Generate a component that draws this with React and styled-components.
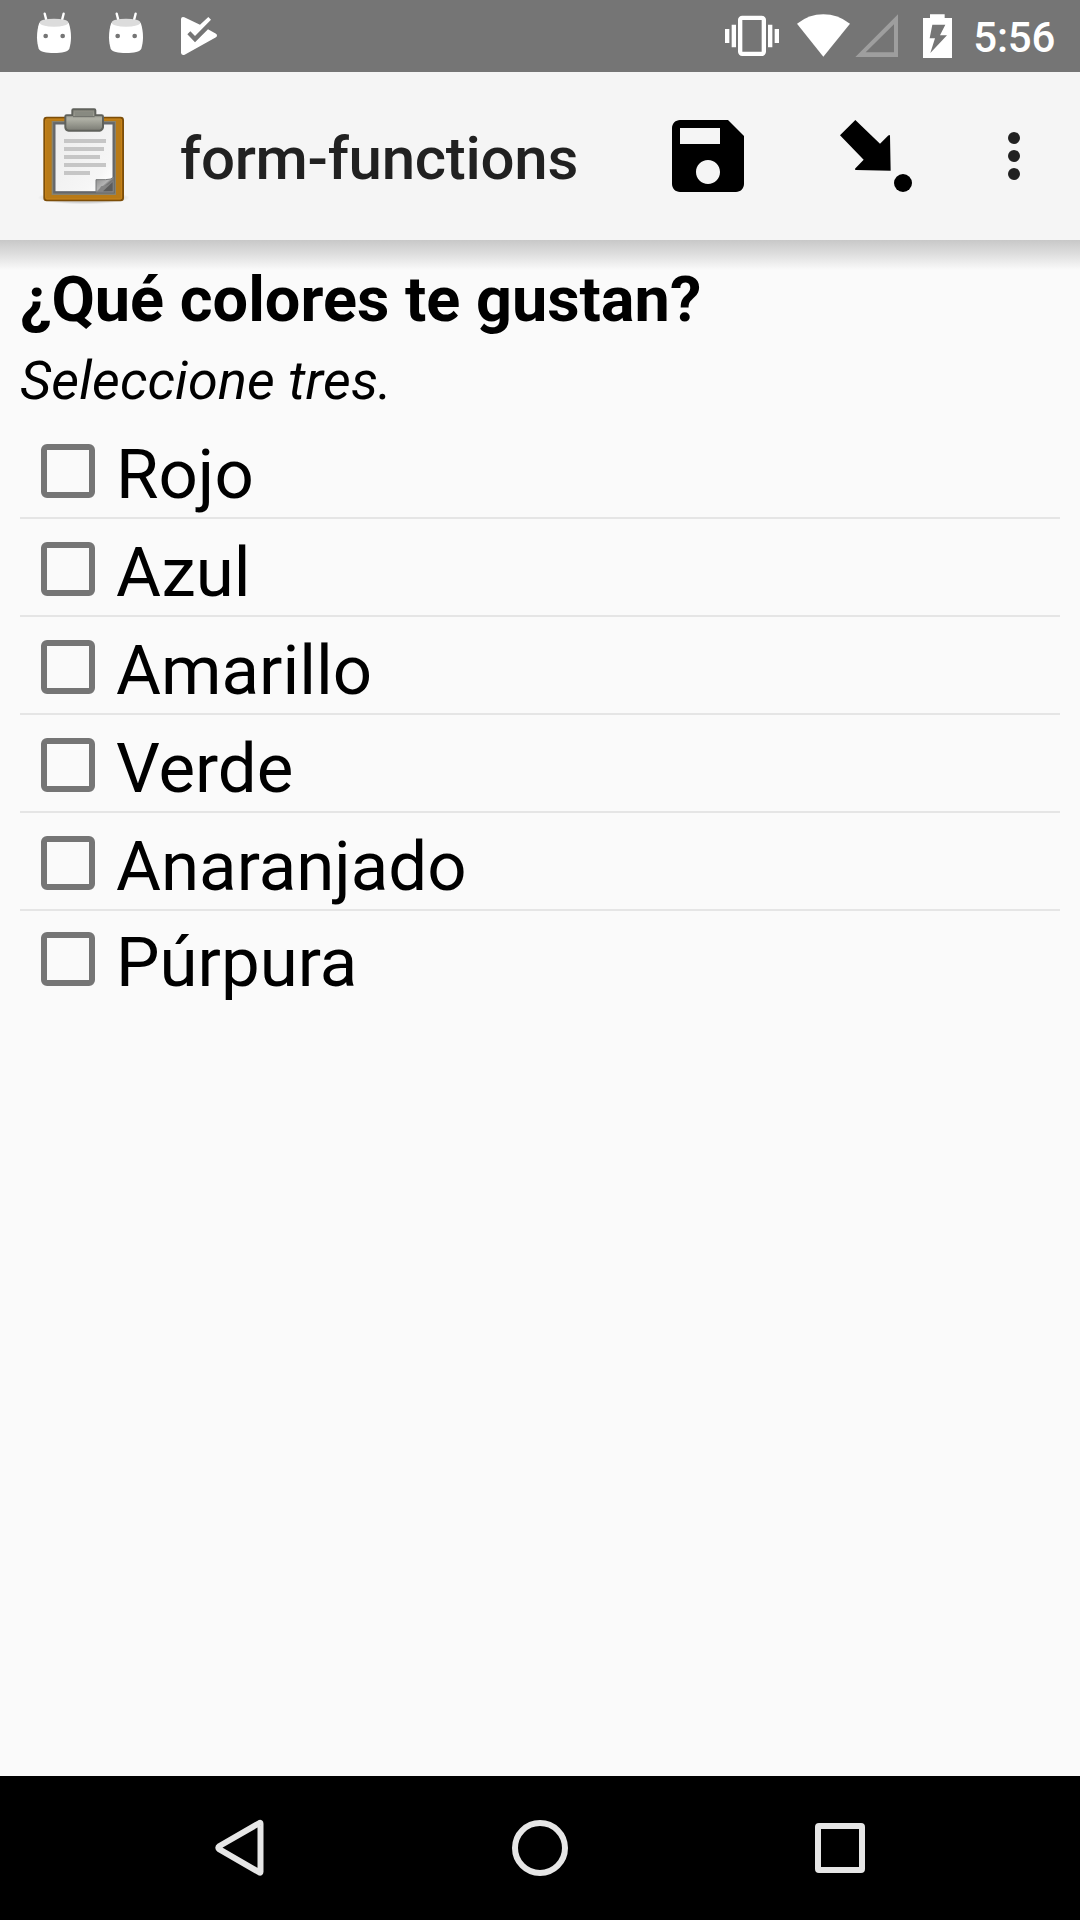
import React, { useState } from 'react'
import styled, { createGlobalStyle } from 'styled-components'

const GlobalStyle = createGlobalStyle`
    * {
        box-sizing: border-box;
    }
    body {
        margin: 0;
        background: #fafafa;
        font-family: Roboto, sans-serif;
    }
    svg {
        display: block;
        flex: none;
    }
`

const Screen = styled.div`
    display: flex;
    flex-direction: column;
    width: 1080px;
    height: 1920px;
    overflow: hidden;
    background: #fafafa;
`

const StatusBar = styled.div`
    display: flex;
    justify-content: space-between;
    height: 72px;
    padding: 0 25px 0 18px;
    background: #757575;
`

const StatusGroup = styled.div`
    display: flex;
`

const StatusIcon = styled.svg`
    height: 72px;
    width: ${({ $width }) => $width}px;
    margin-right: ${({ $gap }) => $gap || 0}px;
    fill: #fff;
`

const Clock = styled.span`
    font-size: 42px;
    font-weight: 500;
    line-height: 75px;
    letter-spacing: -0.25px;
    color: #fff;
`

const Toolbar = styled.header`
    display: flex;
    align-items: center;
    flex: none;
    height: 168px;
    padding: 0 48px 0 20px;
    background: #f5f5f5;
`

const Title = styled.h1`
    flex: 1;
    margin: 6px 0 0 30px;
    font-size: 60px;
    font-weight: 500;
    line-height: 70px;
    letter-spacing: -0.28px;
    color: #212121;
`

const IconButton = styled.button`
    display: flex;
    margin: 0 0 0 ${({ $gap }) => $gap}px;
    padding: 0;
    border: 0;
    background: none;
`

const Content = styled.main`
    flex: 1;
    padding: 23px 20px 0;
    background: linear-gradient(to bottom, #c8c8c8 0, #dedede 14px, #fafafa 30px) no-repeat;
    color: #000;
`

const Question = styled.h2`
    margin: 0;
    font-size: 63px;
    font-weight: 700;
    line-height: 74px;
`

const Hint = styled.p`
    margin: 12px 0 0;
    font-size: 54px;
    font-style: italic;
    line-height: 64px;
    letter-spacing: 0.14px;
`

const Options = styled.ul`
    margin: 8px 0 0;
    padding: 0;
    list-style: none;
`

const Option = styled.li`
    height: 98px;
    padding-top: 2px;
    border-bottom: 2px solid #e5e5e5;
    &:last-child {
        padding-top: 0;
        border-bottom: 0;
    }
`

const OptionLabel = styled.label`
    display: flex;
    align-items: flex-start;
    padding: 21px 0 0 21px;
`

const Checkbox = styled.input`
    appearance: none;
    flex: none;
    width: 54px;
    height: 54px;
    margin: 0 21px 0 0;
    border: 6px solid #757575;
    border-radius: 6px;
    &:checked {
        background: #757575;
    }
`

const OptionText = styled.span`
    margin-top: -10px;
    font-size: 69px;
    line-height: 81px;
`

const NavigationBar = styled.nav`
    display: flex;
    justify-content: center;
    align-items: center;
    gap: 200px;
    flex: none;
    height: 144px;
    background: #000;
    svg {
        fill: none;
        stroke: #e6e6e6;
        stroke-width: 6;
        stroke-linejoin: round;
    }
`

const RobotIcon = () => (
    <StatusIcon $width={72} viewBox="54 0 216 216">
        <path d="M134 41l6 23M191 41l-6 23" stroke="#fff" strokeWidth="7" strokeLinecap="round" />
        <path d="M118 68C113 82 111 98 111 112c0 12 2 24 5 34 4 9 22 13 46 13s42-4 46-13c3-10 5-22 5-34 0-14-2-30-7-44z" />
        <ellipse cx="162" cy="68" rx="43" ry="12" fill="#dcdcdc" />
        <circle cx="137" cy="108" r="7" fill="#757575" />
        <circle cx="188" cy="108" r="7" fill="#757575" />
    </StatusIcon>
)

const PlayCheckIcon = () => (
    <StatusIcon $width={72} viewBox="486 0 216 216">
        <path d="M543 57q1-8 10-5l47 22 25-23 8 8-48 49-14-14-9 9 23 24 39-39 24 13q6 5 0 11l-94 52q-9 3-11-5z" />
    </StatusIcon>
)

const ClipboardIcon = () => (
    <svg width="130" height="130" viewBox="0 0 390 390">
        <defs>
            <linearGradient id="paper" x1="0" y1="0" x2="1" y2="1">
                <stop offset="0" stopColor="#ececec" />
                <stop offset=".75" stopColor="#f6f6f6" />
                <stop offset=".9" stopColor="#ffffff" />
            </linearGradient>
            <linearGradient id="clip" x1="0" y1="0" x2="0" y2="1">
                <stop offset="0" stopColor="#85867c" />
                <stop offset=".45" stopColor="#b0b1a6" />
                <stop offset="1" stopColor="#7b7c74" />
            </linearGradient>
            <linearGradient id="curl" x1="0" y1="0" x2="1" y2="1">
                <stop offset="0" stopColor="#8c8c8c" />
                <stop offset=".45" stopColor="#b4b4b4" />
                <stop offset=".55" stopColor="#757575" />
                <stop offset="1" stopColor="#a2a2a2" />
            </linearGradient>
            <radialGradient id="shade">
                <stop offset=".7" stopColor="#000" stopOpacity=".16" />
                <stop offset="1" stopColor="#000" stopOpacity="0" />
            </radialGradient>
        </defs>
        <ellipse cx="191" cy="320" rx="138" ry="20" fill="url(#shade)" />
        <rect x="73" y="80" width="236" height="248" rx="7" fill="#b87a17" stroke="#7d4e08" strokeWidth="6" />
        <rect x="77" y="84" width="228" height="240" rx="4" fill="none" stroke="#c9841a" strokeWidth="3" />
        <rect x="95" y="90" width="193" height="222" fill="#88836f" />
        <rect x="103" y="97" width="178" height="207" fill="url(#paper)" stroke="#65676a" strokeWidth="7" />
        <path d="M132 150h126M132 174h120M132 198h108M132 222h126M132 246h78" stroke="#c6c6c6" strokeWidth="12" />
        <path d="M228 304v-38h28q17 0 25-7v45z" fill="url(#curl)" stroke="#77797a" strokeWidth="3" />
        <path d="M233 302q8-9 10-16 24-2 37-15v31z" fill="#858585" />
        <path d="M249 301l29-28v28z" fill="#5c5c5c" />
        <path d="M136 76q0-3 4-3h17V58q0-3 3-3h63q3 0 3 3v15h19q4 0 4 4v32q-2 9-10 10h-93q-9-1-10-10z" fill="url(#clip)" stroke="#60625c" strokeWidth="6" />
        <path d="M164 62h55v14h-55z" fill="#888a81" />
        <path d="M159 77h65" stroke="#6b6d66" strokeWidth="3" />
    </svg>
)

const options = ['Rojo', 'Azul', 'Amarillo', 'Verde', 'Anaranjado', 'Púrpura']

function App() {
    const [selected, setSelected] = useState([])

    const toggle = (name) => {
        setSelected(selected.includes(name) ? selected.filter((item) => item !== name) : [...selected, name])
    }

    return (
        <Screen>
            <GlobalStyle />
            <StatusBar>
                <StatusGroup>
                    <RobotIcon />
                    <RobotIcon />
                    <PlayCheckIcon />
                </StatusGroup>
                <StatusGroup>
                    <StatusIcon $width={56} $gap={16} viewBox="72 0 168 216">
                        <path d="M75 87h13v42H75zM95 74h13v68H95zM204 74h13v68h-13zM224 87h13v42h-13z" />
                        <rect x="120.500" y="53.500" width="71" height="108" rx="6" fill="none" stroke="#fff" strokeWidth="13" />
                    </StatusIcon>
                    <StatusIcon $width={55} $gap={4} viewBox="288 0 165 216">
                        <path d="M370 170L291 71q36-28 79-28t80 28z" />
                    </StatusIcon>
                    <StatusIcon $width={44} $gap={23} viewBox="465 0 132 216">
                        <path fillRule="evenodd" d="M594 43v128H466zM582 73l-85 84h85z" fill="#9e9e9e" />
                    </StatusIcon>
                    <StatusIcon $width={31} $gap={20} viewBox="666 0 93 216">
                        <path fillRule="evenodd" d="M690 43h44v11h22v120h-87V54h21zM697 74l-8 41h16l-14 44 50-53h-21l16-32z" />
                    </StatusIcon>
                    <Clock>5:56</Clock>
                </StatusGroup>
            </StatusBar>
            <Toolbar>
                <ClipboardIcon />
                <Title>form-functions</Title>
                <IconButton $gap={0} aria-label="Guardar">
                    <svg width="96" height="96" viewBox="0 0 24 24">
                        <path d="M17 3H5c-1.110 0-2 .9-2 2v14c0 1.100.89 2 2 2h14c1.100 0 2-.9 2-2V7l-4-4zm-5 16c-1.660 0-3-1.340-3-3s1.340-3 3-3 3 1.340 3 3-1.340 3-3 3zm3-10H5V5h10v4z" />
                    </svg>
                </IconButton>
                <IconButton $gap={84} aria-label="Ir a">
                    <svg width="72" height="72" viewBox="600 90 216 216">
                        <path d="M646 90l74 71 24-24q6-5 6 1l2 104-104-2q-6-1-1-6l24-25-71-73z" />
                        <circle cx="789" cy="279" r="27" />
                    </svg>
                </IconButton>
                <IconButton $gap={84} aria-label="Más opciones">
                    <svg width="36" height="72" viewBox="0 0 36 72" fill="#212121">
                        <circle cx="18" cy="18" r="6" />
                        <circle cx="18" cy="36" r="6" />
                        <circle cx="18" cy="54" r="6" />
                    </svg>
                </IconButton>
            </Toolbar>
            <Content>
                <Question>¿Qué colores te gustan?</Question>
                <Hint>Seleccione tres.</Hint>
                <Options>
                    {options.map((name) => (
                        <Option key={name}>
                            <OptionLabel>
                                <Checkbox type="checkbox" checked={selected.includes(name)} onChange={() => toggle(name)} />
                                <OptionText>{name}</OptionText>
                            </OptionLabel>
                        </Option>
                    ))}
                </Options>
            </Content>
            <NavigationBar>
                <svg width="100" height="100" viewBox="0 0 100 100">
                    <path d="M69.500 23.500L29.500 46.500q-2.500 1.700 0 3.400L69.500 73q1 .5 1-.8V24.300q0-1.300-1-.8z" transform="translate(0 1.500)" />
                </svg>
                <svg width="100" height="100" viewBox="0 0 100 100">
                    <circle cx="50" cy="50" r="25" />
                </svg>
                <svg width="100" height="100" viewBox="0 0 100 100">
                    <rect x="28" y="28" width="44" height="44" rx="1" />
                </svg>
            </NavigationBar>
        </Screen>
    )
}

export default App
